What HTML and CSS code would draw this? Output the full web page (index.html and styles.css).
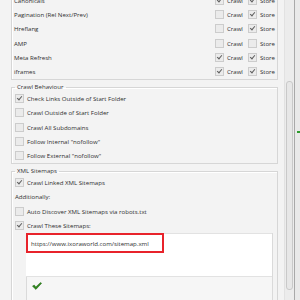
FILE: index.html
```html
<!DOCTYPE html>
<html lang="en">
<head>
    <meta charset="UTF-8">
    <title>Spider Configuration</title>
    <link rel="stylesheet" href="styles.css">
</head>
<body>

    <div class="window">
        <div class="content">

            <!-- Link elements -->
            <fieldset class="group group-top">
                <div class="row">
                    <span class="label">Canonicals</span>
                    <span class="opts"><span class="cb checked"></span><span class="opt">Crawl</span><span class="cb checked"></span><span class="opt">Store</span></span>
                </div>
                <div class="row">
                    <span class="label">Pagination (Rel Next/Prev)</span>
                    <span class="opts"><span class="cb"></span><span class="opt">Crawl</span><span class="cb checked"></span><span class="opt">Store</span></span>
                </div>
                <div class="row">
                    <span class="label">Hreflang</span>
                    <span class="opts"><span class="cb"></span><span class="opt">Crawl</span><span class="cb checked"></span><span class="opt">Store</span></span>
                </div>
                <div class="row">
                    <span class="label">AMP</span>
                    <span class="opts"><span class="cb"></span><span class="opt">Crawl</span><span class="cb"></span><span class="opt">Store</span></span>
                </div>
                <div class="row">
                    <span class="label">Meta Refresh</span>
                    <span class="opts"><span class="cb checked"></span><span class="opt">Crawl</span><span class="cb checked"></span><span class="opt">Store</span></span>
                </div>
                <div class="row">
                    <span class="label">iframes</span>
                    <span class="opts"><span class="cb checked"></span><span class="opt">Crawl</span><span class="cb checked"></span><span class="opt">Store</span></span>
                </div>
            </fieldset>

            <!-- Crawl behaviour -->
            <fieldset class="group">
                <legend>Crawl Behaviour</legend>
                <div class="row"><span class="cb checked"></span>Check Links Outside of Start Folder</div>
                <div class="row"><span class="cb"></span>Crawl Outside of Start Folder</div>
                <div class="row"><span class="cb"></span>Crawl All Subdomains</div>
                <div class="row"><span class="cb"></span>Follow Internal "nofollow"</div>
                <div class="row"><span class="cb"></span>Follow External "nofollow"</div>
            </fieldset>

            <!-- XML sitemaps -->
            <fieldset class="group group-last">
                <legend>XML Sitemaps</legend>
                <div class="row"><span class="cb checked"></span>Crawl Linked XML Sitemaps</div>
                <div class="row">Additionally:</div>
                <div class="row"><span class="cb"></span>Auto Discover XML Sitemaps via robots.txt</div>
                <div class="row"><span class="cb checked"></span>Crawl These Sitemaps:</div>

                <div class="sitemap-box">
                    <div class="sitemap-input">
                        <div class="sitemap-url">https://www.ixoraworld.com/sitemap.xml</div>
                    </div>
                    <div class="sitemap-status">
                        <svg class="ok-icon" width="10" height="8" viewBox="0 0 10 8">
                            <path d="M0.5 4.2 L2.2 3 L3.8 5 L8.6 0.4 L9.6 1.3 L3.9 7.4 Z" fill="#2f8a1c" stroke="#1f5e12" stroke-width="0.5"/>
                        </svg>
                    </div>
                </div>
            </fieldset>
        </div>

        <div class="scrollbar">
            <div class="thumb"></div>
        </div>
        <div class="edge">
            <div class="edge-mark"></div>
        </div>
    </div>

</body>
</html>
```

FILE: styles.css
```css
/* Global Styles */
body {
    margin: 0;
    background-color: #f3f3f3;
    font-family: "Open Sans", "Noto Sans", sans-serif;
    font-size: 6.1px;
    color: #2f2f2f;
    overflow: hidden;
}

.window {
    display: flex;
    height: 300px;
    overflow: hidden;
}

.content {
    width: 284px;
    flex-shrink: 0;
    margin-top: -7.2px;
}

/* Group boxes */
.group {
    margin: 3px 6px 0 11px;
    padding: 0 0 0 3px;
    border: 1px solid #d6d6d6;
    box-shadow: inset 1px 1px 0 #fff;
    min-width: 0;
}

.group legend {
    padding: 0 2px;
    margin-left: 0;
    line-height: 8px;
}

.group-top {
    margin-top: 0;
    border-top: none;
    padding-left: 2px;
}

.group-last {
    border-bottom: none;
}

.row {
    display: flex;
    align-items: center;
    height: 14.4px;
    white-space: nowrap;
}

.label {
    flex-grow: 1;
}

.opts {
    display: flex;
    align-items: center;
    margin-right: 2px;
}

.opt {
    margin-right: 5px;
}

.opt:last-child {
    margin-right: 0;
}

/* Checkboxes */
.cb {
    width: 7px;
    height: 7px;
    border: 1px solid #cccccc;
    background-color: #ebebeb;
    margin-right: 3px;
    position: relative;
    flex-shrink: 0;
}

.cb.checked::after {
    content: "";
    position: absolute;
    left: 2px;
    top: 0px;
    width: 2px;
    height: 4px;
    border-right: 1px solid #5e5e5e;
    border-bottom: 1px solid #5e5e5e;
    transform: rotate(40deg);
}

/* Sitemap text area */
.sitemap-box {
    margin-left: 11px;
    width: 245px;
    border-left: 1px solid #dadada;
    border-right: 1px solid #dadada;
}

.sitemap-input {
    height: 44px;
    background-color: #fff;
    border-top: 1px solid #e2e2e2;
    border-bottom: 1px solid #e2e2e2;
    box-sizing: border-box;
    margin-top: 0.4px;
    margin-left: -1px;
}

.sitemap-url {
    width: 131px;
    height: 16px;
    border: 2px solid #e8232b;
    padding-left: 3px;
    display: flex;
    align-items: center;
    margin-top: -1px;
}

.sitemap-status {
    height: 40px;
    background-color: #f6f6f6;
    padding: 5px 0 0 5px;
}

.ok-icon {
    display: block;
}

/* Scrollbar */
.scrollbar {
    width: 10px;
    flex-shrink: 0;
    background-color: #ececec;
    border-left: 1px solid #e2e2e2;
    box-sizing: border-box;
    padding: 0 1px;
}

.thumb {
    margin-top: 81px;
    height: 207px;
    border: 1px solid #c9c9c9;
    border-radius: 3px;
    background-color: #e7e7e7;
}

.edge {
    flex-grow: 1;
    border-left: 1px solid #a9a9a9;
    background-color: #e9e9e9;
    padding-top: 131px;
}

.edge-mark {
    height: 2px;
    background-color: #2e9b2e;
    margin-left: 2px;
}
```
